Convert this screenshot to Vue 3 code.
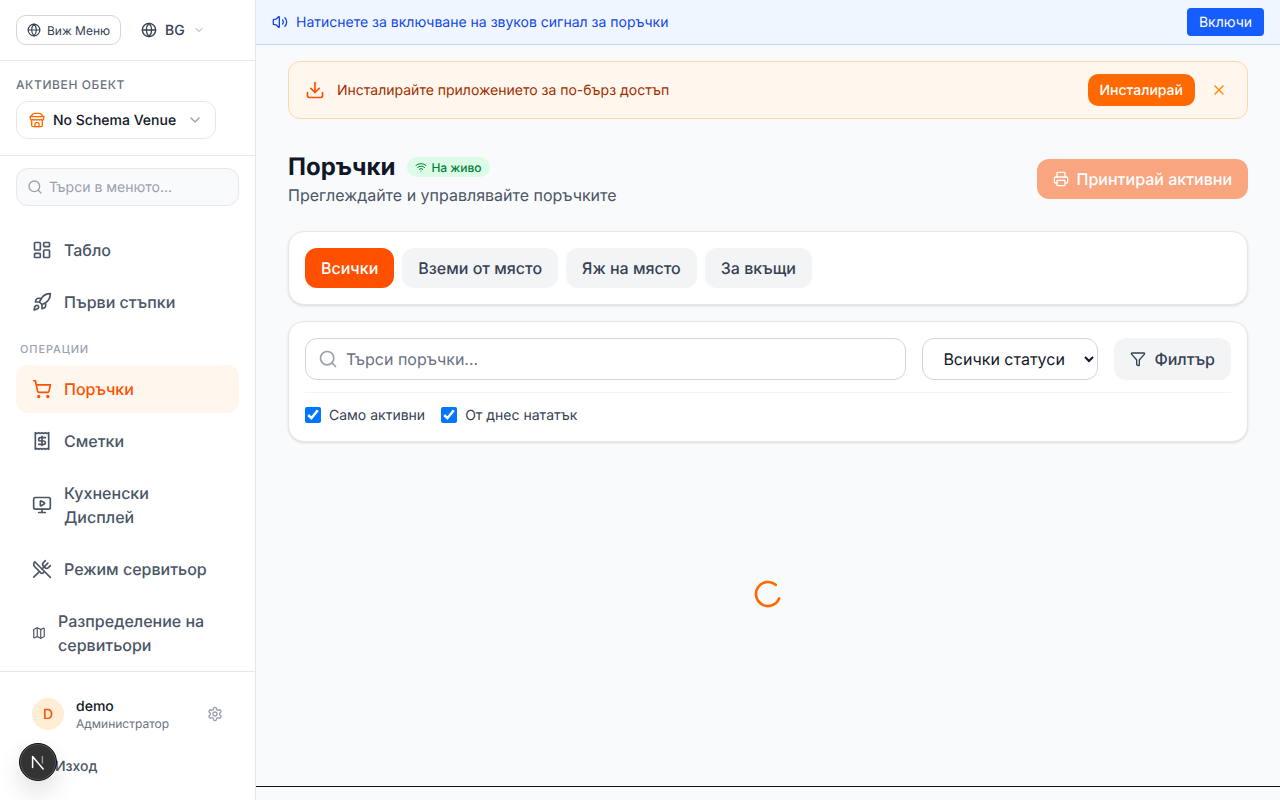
<template>
  <div class="app">
    <aside class="sidebar">
      <div class="top-row">
        <button class="menu-btn">
          <svg class="i14" viewBox="0 0 24 24"><circle cx="12" cy="12" r="10"/><path d="M12 2a14.5 14.5 0 0 0 0 20 14.5 14.5 0 0 0 0-20"/><path d="M2 12h20"/></svg>
          Виж Меню
        </button>
        <button class="lang-btn">
          <svg class="i16" viewBox="0 0 24 24"><circle cx="12" cy="12" r="10"/><path d="M12 2a14.5 14.5 0 0 0 0 20 14.5 14.5 0 0 0 0-20"/><path d="M2 12h20"/></svg>
          <span>BG</span>
          <svg class="i12 muted" viewBox="0 0 24 24"><path d="m6 9 6 6 6-6"/></svg>
        </button>
      </div>
      <div class="venue">
        <div class="venue-label">АКТИВЕН ОБЕКТ</div>
        <button class="venue-btn">
          <svg class="i16 orange" viewBox="0 0 24 24"><path d="m2 7 4.41-4.41A2 2 0 0 1 7.83 2h8.34a2 2 0 0 1 1.42.59L22 7"/><path d="M4 12v8a2 2 0 0 0 2 2h12a2 2 0 0 0 2-2v-8"/><path d="M15 22v-4a2 2 0 0 0-2-2h-2a2 2 0 0 0-2 2v4"/><path d="M2 7h20"/><path d="M22 7v3a2 2 0 0 1-2 2a2.7 2.7 0 0 1-1.59-.63.7.7 0 0 0-.82 0A2.7 2.7 0 0 1 16 12a2.7 2.7 0 0 1-1.59-.63.7.7 0 0 0-.82 0A2.7 2.7 0 0 1 12 12a2.7 2.7 0 0 1-1.59-.63.7.7 0 0 0-.82 0A2.7 2.7 0 0 1 8 12a2.7 2.7 0 0 1-1.59-.63.7.7 0 0 0-.82 0A2.7 2.7 0 0 1 4 12a2 2 0 0 1-2-2V7"/></svg>
          <span class="venue-name">No Schema Venue</span>
          <svg class="i16 muted" viewBox="0 0 24 24"><path d="m6 9 6 6 6-6"/></svg>
        </button>
      </div>
      <div class="menu-search-wrap">
        <div class="menu-search">
          <svg class="i16" viewBox="0 0 24 24"><circle cx="11" cy="11" r="8"/><path d="m21 21-4.3-4.3"/></svg>
          <span>Търси в менюто...</span>
        </div>
      </div>
      <nav class="nav">
        <a class="nav-item">
          <svg class="i20" viewBox="0 0 24 24"><rect x="3" y="3" width="7" height="9" rx="1"/><rect x="14" y="3" width="7" height="5" rx="1"/><rect x="14" y="12" width="7" height="9" rx="1"/><rect x="3" y="16" width="7" height="5" rx="1"/></svg>
          <span>Табло</span>
        </a>
        <a class="nav-item">
          <svg class="i20" viewBox="0 0 24 24"><path d="M4.5 16.5c-1.5 1.26-2 5-2 5s3.74-.5 5-2c.71-.84.7-2.13-.09-2.91a2.18 2.18 0 0 0-2.91-.09z"/><path d="m12 15-3-3a22 22 0 0 1 2-3.95A12.88 12.88 0 0 1 22 2c0 2.72-.78 7.5-6 11a22.35 22.35 0 0 1-4 2z"/><path d="M9 12H4s.55-3.03 2-4c1.62-1.08 5 0 5 0"/><path d="M12 15v5s3.03-.55 4-2c1.08-1.62 0-5 0-5"/></svg>
          <span>Първи стъпки</span>
        </a>
        <div class="nav-section">ОПЕРАЦИИ</div>
        <a class="nav-item active">
          <svg class="i20" viewBox="0 0 24 24"><circle cx="8" cy="21" r="1"/><circle cx="19" cy="21" r="1"/><path d="M2.05 2.05h2l2.66 12.42a2 2 0 0 0 2 1.58h9.78a2 2 0 0 0 1.95-1.57l1.65-7.43H5.12"/></svg>
          <span>Поръчки</span>
        </a>
        <a class="nav-item">
          <svg class="i20" viewBox="0 0 24 24"><path d="M4 2v20l2-1 2 1 2-1 2 1 2-1 2 1 2-1 2 1V2l-2 1-2-1-2 1-2-1-2 1-2-1-2 1Z"/><path d="M16 8h-6a2 2 0 1 0 0 4h4a2 2 0 1 1 0 4H8"/><path d="M12 17.5v-11"/></svg>
          <span>Сметки</span>
        </a>
        <a class="nav-item">
          <svg class="i20" viewBox="0 0 24 24"><path d="M10 7.75a.75.75 0 0 1 1.142-.638l3.664 2.249a.75.75 0 0 1 0 1.278l-3.664 2.25a.75.75 0 0 1-1.142-.64z"/><path d="M12 17v4"/><path d="M8 21h8"/><rect x="2" y="3" width="20" height="14" rx="2"/></svg>
          <span>Кухненски Дисплей</span>
        </a>
        <a class="nav-item">
          <svg class="i20" viewBox="0 0 24 24"><path d="m16 2-2.3 2.3a3 3 0 0 0 0 4.2l1.8 1.8a3 3 0 0 0 4.2 0L22 8"/><path d="M15 15 3.3 3.3a4.2 4.2 0 0 0 0 6l7.3 7.3c.7.7 2 .7 2.8 0L15 15Zm0 0 7 7"/><path d="m2.1 21.8 6.4-6.3"/><path d="m19 5-7 7"/></svg>
          <span>Режим сервитьор</span>
        </a>
        <a class="nav-item">
          <svg class="i14" viewBox="0 0 24 24"><path d="M14.106 5.553a2 2 0 0 0 1.788 0l3.659-1.83A1 1 0 0 1 21 4.619v12.764a1 1 0 0 1-.553.894l-4.553 2.277a2 2 0 0 1-1.788 0l-4.212-2.106a2 2 0 0 0-1.788 0l-3.659 1.83A1 1 0 0 1 3 19.381V6.618a1 1 0 0 1 .553-.894l4.553-2.277a2 2 0 0 1 1.788 0z"/><path d="M15 5.764v15"/><path d="M9 3.236v15"/></svg>
          <span>Разпределение на сервитьори</span>
        </a>
      </nav>
      <div class="user-box">
        <div class="user-row">
          <div class="avatar">D</div>
          <div class="user-text">
            <div class="user-name">demo</div>
            <div class="user-role">Администратор</div>
          </div>
          <svg class="i16 gear" viewBox="0 0 24 24"><path d="M12.22 2h-.44a2 2 0 0 0-2 2v.18a2 2 0 0 1-1 1.73l-.43.25a2 2 0 0 1-2 0l-.15-.08a2 2 0 0 0-2.73.73l-.22.38a2 2 0 0 0 .73 2.73l.15.1a2 2 0 0 1 1 1.72v.51a2 2 0 0 1-1 1.74l-.15.09a2 2 0 0 0-.73 2.73l.22.38a2 2 0 0 0 2.73.73l.15-.08a2 2 0 0 1 2 0l.43.25a2 2 0 0 1 1 1.73V20a2 2 0 0 0 2 2h.44a2 2 0 0 0 2-2v-.18a2 2 0 0 1 1-1.73l.43-.25a2 2 0 0 1 2 0l.15.08a2 2 0 0 0 2.73-.73l.22-.39a2 2 0 0 0-.73-2.73l-.15-.08a2 2 0 0 1-1-1.74v-.5a2 2 0 0 1 1-1.74l.15-.09a2 2 0 0 0 .73-2.73l-.22-.38a2 2 0 0 0-2.73-.73l-.15.08a2 2 0 0 1-2 0l-.43-.25a2 2 0 0 1-1-1.73V4a2 2 0 0 0-2-2z"/><circle cx="12" cy="12" r="3"/></svg>
        </div>
        <div class="logout">Изход</div>
      </div>
      <div class="next-badge">
        <svg width="18" height="18" viewBox="0 0 18 18"><path d="M3.6 14.5V3.6L14.2 16" fill="none" stroke="#fff" stroke-width="1.5"/><path d="M13.4 3.6V10" fill="none" stroke="#999" stroke-width="1.4"/></svg>
      </div>
    </aside>

    <div class="content">
      <div class="sound-bar">
        <div class="sound-left">
          <svg class="i16" viewBox="0 0 24 24"><path d="M11 4.702a.705.705 0 0 0-1.203-.498L6.413 7.587A1.4 1.4 0 0 1 5.416 8H3a1 1 0 0 0-1 1v6a1 1 0 0 0 1 1h2.416a1.4 1.4 0 0 1 .997.413l3.383 3.384A.705.705 0 0 0 11 19.298z"/><path d="M16 9a5 5 0 0 1 0 6"/><path d="M19.364 18.364a9 9 0 0 0 0-12.728"/></svg>
          <span>Натиснете за включване на звуков сигнал за поръчки</span>
        </div>
        <button class="sound-btn">Включи</button>
      </div>

      <main class="main">
        <div class="install">
          <svg class="i20 install-icon" viewBox="0 0 24 24"><path d="M12 15V3"/><path d="M21 15v4a2 2 0 0 1-2 2H5a2 2 0 0 1-2-2v-4"/><path d="m7 10 5 5 5-5"/></svg>
          <span class="install-text">Инсталирайте приложението за по-бърз достъп</span>
          <button class="install-btn">Инсталирай</button>
          <svg class="i16 install-x" viewBox="0 0 24 24"><path d="M18 6 6 18"/><path d="m6 6 12 12"/></svg>
        </div>

        <div class="head">
          <div>
            <div class="title-row">
              <h1>Поръчки</h1>
              <span class="live">
                <svg class="i12" viewBox="0 0 24 24"><path d="M12 20h.01"/><path d="M2 8.82a15 15 0 0 1 20 0"/><path d="M5 12.859a10 10 0 0 1 14 0"/><path d="M8.5 16.429a5 5 0 0 1 7 0"/></svg>
                На живо
              </span>
            </div>
            <p class="subtitle">Преглеждайте и управлявайте поръчките</p>
          </div>
          <button class="print-btn">
            <svg class="i16" viewBox="0 0 24 24"><path d="M6 18H4a2 2 0 0 1-2-2v-5a2 2 0 0 1 2-2h16a2 2 0 0 1 2 2v5a2 2 0 0 1-2 2h-2"/><path d="M6 9V3a1 1 0 0 1 1-1h10a1 1 0 0 1 1 1v6"/><rect x="6" y="14" width="12" height="8" rx="1"/></svg>
            Принтирай активни
          </button>
        </div>

        <div class="card tabs">
          <button v-for="(t, i) in tabs" :key="t" class="tab" :class="{ on: i === 0 }">{{ t }}</button>
        </div>

        <div class="card filters">
          <div class="filter-row">
            <div class="search">
              <svg class="i20" viewBox="0 0 24 24"><circle cx="11" cy="11" r="8"/><path d="m21 21-4.3-4.3"/></svg>
              <input class="search-input" placeholder="Търси поръчки..." />
            </div>
            <select class="status"><option>Всички статуси</option></select>
            <button class="filter-btn">
              <svg class="i16" viewBox="0 0 24 24"><path d="M10 20a1 1 0 0 0 .553.895l2 1A1 1 0 0 0 14 21v-7a2 2 0 0 1 .517-1.341L21.74 4.67A1 1 0 0 0 21 3H3a1 1 0 0 0-.742 1.67l7.225 7.989A2 2 0 0 1 10 14z"/></svg>
              Филтър
            </button>
          </div>
          <div class="checks">
            <label class="check"><input type="checkbox" checked /><span>Само активни</span></label>
            <label class="check"><input type="checkbox" checked /><span>От днес нататък</span></label>
          </div>
        </div>

        <div class="spinner-wrap">
          <svg class="spinner" width="32" height="32" viewBox="0 0 24 24"><path d="M21 12a9 9 0 1 1-6.219-8.56"/></svg>
        </div>
      </main>
      <div class="bottom-line"></div>
    </div>
  </div>
</template>

<script setup>
const tabs = ['Всички', 'Вземи от място', 'Яж на място', 'За вкъщи']
</script>

<style>
body { margin: 0; background: #fff; }
</style>

<style scoped>
.app {
  display: flex;
  height: 800px;
  overflow: hidden;
  font-family: Inter, "Noto Sans", sans-serif;
  color: #101828;
  text-rendering: geometricPrecision;
  -webkit-font-smoothing: antialiased;
}
button { font-family: inherit; cursor: pointer; text-rendering: geometricPrecision; }
input, select { text-rendering: geometricPrecision; }
svg { fill: none; stroke: currentColor; stroke-width: 2; stroke-linecap: round; stroke-linejoin: round; flex-shrink: 0; }
.i12 { width: 12px; height: 12px; }
.i14 { width: 14px; height: 14px; }
.i16 { width: 16px; height: 16px; }
.i20 { width: 20px; height: 20px; }
.muted { color: #99a1af; }
.orange { color: #ff6900; }

.sidebar {
  width: 256px;
  box-sizing: border-box;
  flex-shrink: 0;
  background: #fff;
  border-right: 1px solid #e5e7eb;
  display: flex;
  flex-direction: column;
  position: relative;
}
.top-row {
  height: 61px;
  box-sizing: border-box;
  border-bottom: 1px solid #e5e7eb;
  padding: 15px 16px 0;
  display: flex;
  align-items: flex-start;
  gap: 12px;
}
.menu-btn {
  height: 30px;
  box-sizing: border-box;
  display: flex;
  align-items: center;
  gap: 6px;
  padding: 0 10px;
  background: #fff;
  border: 1px solid #d1d5dc;
  border-radius: 10px;
  font-size: 12px;
  color: #364153;
}
.lang-btn {
  height: 30px;
  display: flex;
  align-items: center;
  gap: 8px;
  padding: 0 8px;
  background: none;
  border: 0;
  font-size: 14px;
  font-weight: 500;
  color: #364153;
}
.venue {
  height: 95px;
  box-sizing: border-box;
  border-bottom: 1px solid #e5e7eb;
  padding: 16px 16px 0;
}
.venue-label {
  font-size: 12px;
  line-height: 16px;
  font-weight: 500;
  letter-spacing: 0.6px;
  color: #6a7282;
  margin-bottom: 8px;
}
.venue-btn {
  width: 200px;
  height: 38px;
  box-sizing: border-box;
  display: flex;
  align-items: center;
  gap: 8px;
  padding: 0 12px;
  background: #fff;
  border: 1px solid #e5e7eb;
  border-radius: 12px;
  font-size: 14px;
  font-weight: 500;
  color: #101828;
}
.venue-name { flex: 1; text-align: left; white-space: nowrap; }
.menu-search-wrap { padding: 12px 16px 0; }
.menu-search {
  height: 38px;
  box-sizing: border-box;
  display: flex;
  align-items: center;
  gap: 6px;
  padding: 0 10px;
  background: #f9fafb;
  border: 1px solid #e5e7eb;
  border-radius: 12px;
  font-size: 14px;
  color: #99a1af;
}
.nav {
  flex: 1;
  min-height: 0;
  overflow: hidden;
  padding: 20px 16px 0;
}
.nav-item {
  display: flex;
  align-items: center;
  gap: 12px;
  padding: 12px 16px;
  margin-bottom: 4px;
  border-radius: 12px;
  font-size: 16px;
  line-height: 24px;
  font-weight: 500;
  color: #4a5565;
}
.nav-item.active { background: #fff7ed; color: #ff4f00; }
.nav-section {
  padding: 0 4px;
  margin: 15px 0 8px;
  font-size: 11px;
  line-height: 16px;
  font-weight: 500;
  letter-spacing: 0.88px;
  color: #99a1af;
}
.user-box {
  height: 129px;
  box-sizing: border-box;
  border-top: 1px solid #e5e7eb;
  padding: 24px 32px 0;
}
.user-row { display: flex; align-items: center; gap: 12px; }
.avatar {
  width: 32px;
  height: 32px;
  border-radius: 50%;
  background: #ffedd4;
  color: #ff4f00;
  display: flex;
  align-items: center;
  justify-content: center;
  font-size: 14px;
  font-weight: 500;
}
.user-text { flex: 1; margin: 1px 0 -1px; }
.user-name { font-size: 14px; line-height: 19px; font-weight: 500; color: #101828; }
.user-role { font-size: 12px; line-height: 16px; margin-bottom: 1px; color: #6a7282; }
.gear { color: #99a1af; }
.logout {
  margin-top: 25px;
  padding-left: 23px;
  font-size: 14px;
  line-height: 20px;
  font-weight: 500;
  color: #4a5565;
}
.next-badge {
  position: absolute;
  left: 19px;
  top: 743px;
  width: 36px;
  height: 36px;
  border-radius: 50%;
  background: #333;
  border: 1px solid #111;
  box-shadow: 0 0 0 1px #555 inset, 0 12px 24px rgba(0, 0, 0, 0.12);
  display: flex;
  align-items: center;
  justify-content: center;
}

.content {
  flex: 1;
  min-width: 0;
  display: flex;
  flex-direction: column;
  background: #f9fafb;
  position: relative;
}
.sound-bar {
  height: 45px;
  box-sizing: border-box;
  flex-shrink: 0;
  background: #eff6ff;
  border-bottom: 1px solid #bedbff;
  padding: 0 16px;
  display: flex;
  align-items: center;
  justify-content: space-between;
}
.sound-left {
  display: flex;
  align-items: center;
  gap: 8px;
  font-size: 14px;
  color: #1447e6;
}
.sound-btn {
  height: 28px;
  padding: 0 12px;
  border: 0;
  border-radius: 4px;
  background: #155dfc;
  color: #fff;
  font-size: 14px;
}
.main { flex: 1; min-height: 0; padding: 16px 32px 0; }
.install {
  height: 58px;
  box-sizing: border-box;
  display: flex;
  align-items: center;
  gap: 12px;
  padding: 0 16px;
  background: #fff7ed;
  border: 1px solid #ffd6a7;
  border-radius: 12px;
}
.install-icon { color: #ff4f00; }
.install-text { flex: 1; font-size: 14px; color: #9f2d00; }
.install-btn {
  height: 32px;
  padding: 0 12px;
  border: 0;
  border-radius: 10px;
  background: #ff6900;
  color: #fff;
  font-size: 14px;
  font-weight: 500;
}
.install-x { color: #ff8904; margin-left: 4px; margin-right: 4px; }
.head {
  margin-top: 32px;
  display: flex;
  justify-content: space-between;
  align-items: center;
}
.title-row { display: flex; align-items: center; gap: 12px; height: 32px; }
h1 { margin: 0; font-size: 24px; line-height: 32px; font-weight: 700; color: #101828; }
.live {
  display: flex;
  align-items: center;
  gap: 4px;
  height: 20px;
  padding: 0 8px;
  border-radius: 10px;
  background: #dcfce7;
  color: #008236;
  font-size: 12px;
  font-weight: 500;
}
.subtitle { margin: 0; font-size: 16px; line-height: 24px; color: #4a5565; }
.print-btn {
  height: 40px;
  display: flex;
  align-items: center;
  gap: 8px;
  padding: 0 16px;
  border: 0;
  border-radius: 12px;
  background: #f9a57f;
  color: #fff;
  font-size: 16px;
  font-weight: 500;
}
.card {
  background: #fff;
  border: 1px solid #e5e7eb;
  border-radius: 16px;
  box-shadow: 0 1px 3px rgba(0, 0, 0, 0.1), 0 1px 2px -1px rgba(0, 0, 0, 0.1);
  box-sizing: border-box;
}
.tabs {
  margin-top: 24px;
  padding: 16px;
  display: flex;
  gap: 8px;
}
.tab {
  height: 40px;
  padding: 0 16px;
  border: 0;
  border-radius: 12px;
  background: #f3f4f6;
  color: #364153;
  font-size: 16px;
  font-weight: 500;
}
.tab.on { background: #ff4f00; color: #fff; }
.filters { margin-top: 16px; padding: 16px; }
.filter-row { display: flex; gap: 16px; align-items: center; }
.search {
  flex: 1;
  height: 42px;
  box-sizing: border-box;
  display: flex;
  align-items: center;
  gap: 8px;
  padding: 0 12px;
  border: 1px solid #d1d5dc;
  border-radius: 12px;
  color: #99a1af;
}
.search-input {
  flex: 1;
  min-width: 0;
  border: 0;
  outline: 0;
  padding: 0;
  background: none;
  font-family: inherit;
  font-size: 16px;
  color: #101828;
}
.search-input::placeholder { color: #6a7282; opacity: 1; }
.status {
  width: 176px;
  height: 42px;
  box-sizing: border-box;
  padding: 0 8px 0 16px;
  border: 1px solid #d1d5dc;
  border-radius: 12px;
  background: #fff;
  font-family: inherit;
  font-size: 16px;
  color: #101828;
}
.filter-btn {
  height: 42px;
  display: flex;
  align-items: center;
  gap: 8px;
  padding: 0 16px;
  border: 0;
  border-radius: 12px;
  background: #f3f4f6;
  color: #364153;
  font-size: 16px;
  font-weight: 500;
}
.checks {
  margin-top: 12px;
  padding-top: 12px;
  border-top: 1px solid #f3f4f6;
  display: flex;
  gap: 16px;
}
.check {
  display: flex;
  align-items: center;
  gap: 8px;
  font-size: 14px;
  line-height: 20px;
  color: #364153;
}
.check span { margin: 1px 0 -1px; }
.check input { width: 16px; height: 16px; margin: 0; accent-color: #0075ff; }
.spinner-wrap { display: flex; justify-content: center; margin-top: 136px; }
.spinner { color: #ff6900; transform: rotate(22deg); }
.bottom-line { height: 14px; flex-shrink: 0; border-top: 1px solid #111; box-sizing: border-box; }
</style>
